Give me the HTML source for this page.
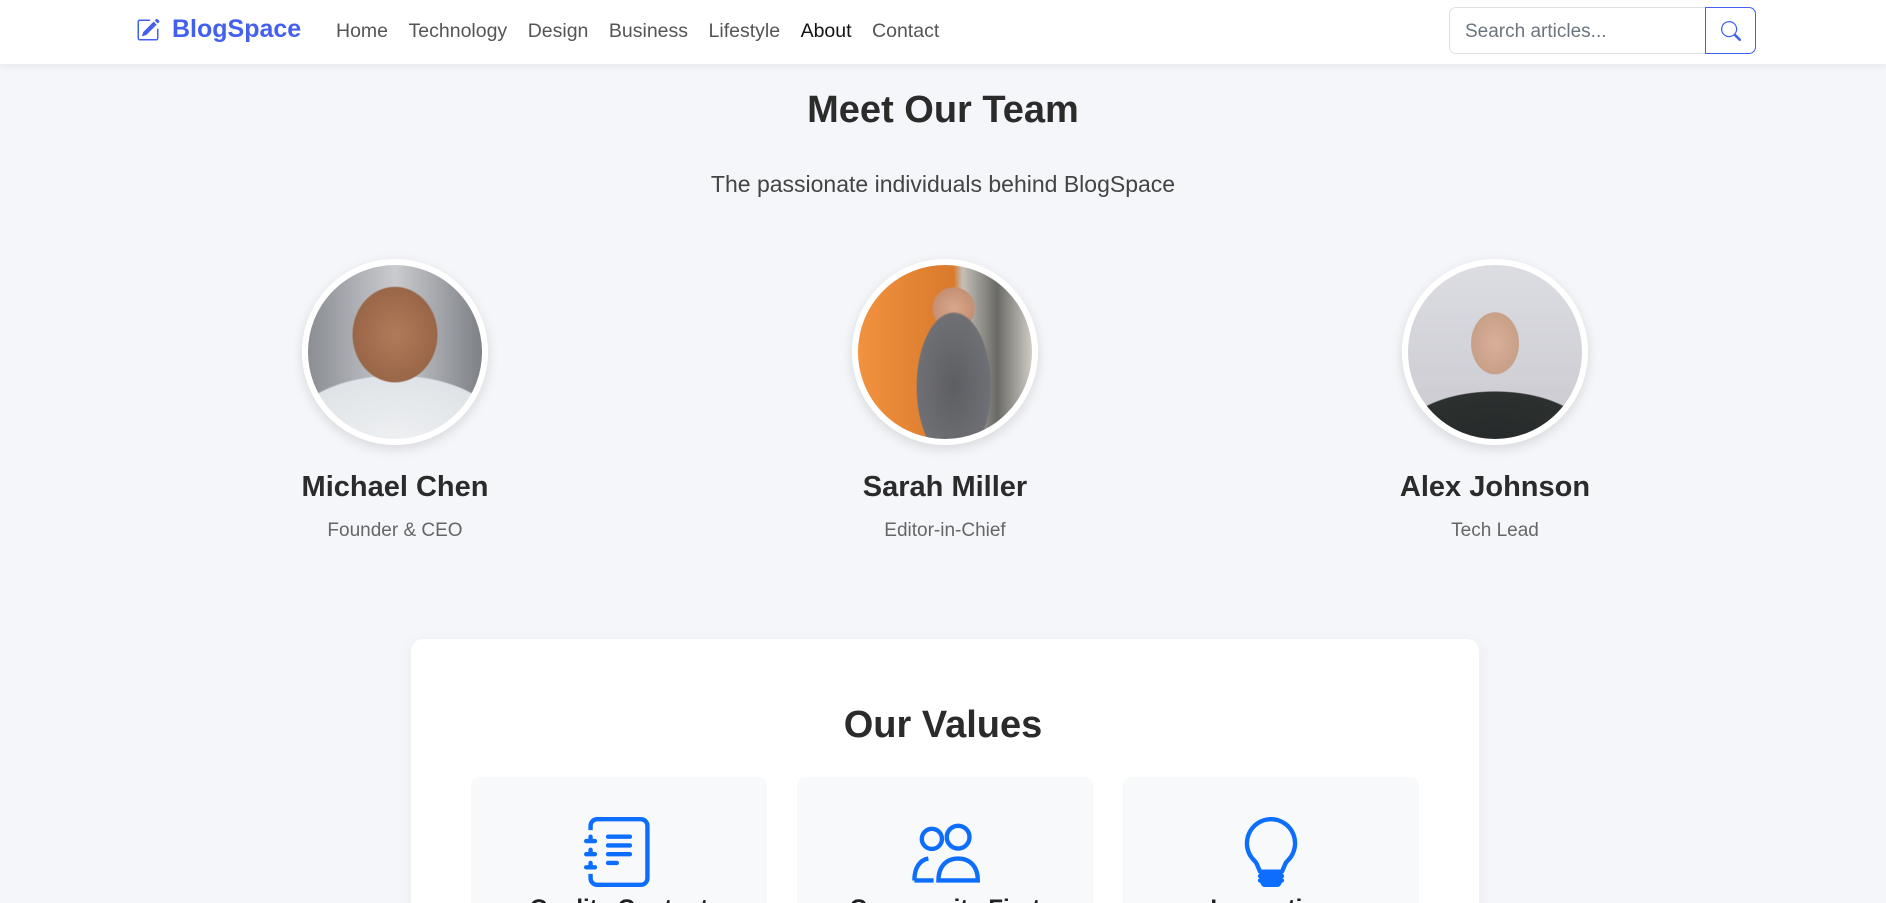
<!DOCTYPE html>
<html><head><meta charset="utf-8">
<style>
*{box-sizing:border-box;margin:0;padding:0}
html{width:1886px;height:903px;overflow:hidden}
body{width:1886px;height:903px;overflow:hidden;background:#f4f6fa;font-family:"Liberation Sans",sans-serif;color:#212529;position:relative}
.nav{position:absolute;left:0;top:0;width:1886px;height:64px;background:#fff;box-shadow:0 2px 8px rgba(0,0,0,.06);z-index:2}
.logo{position:absolute;left:136px;top:15px;display:flex;align-items:center;color:#4361ee;font-weight:bold;font-size:25px}
.logo svg{margin-right:12px}
.links{position:absolute;left:336px;top:20px;font-size:19.5px;color:#555}
.links span{margin-right:20.5px}
.search{position:absolute;left:1449px;top:7px;width:307px;height:47px;border:1px solid #dee2e6;border-radius:7px;background:#fff}
.search .ph{position:absolute;left:15px;top:13px;font-size:19px;color:#6c757d}
.search .btn{position:absolute;right:-1px;top:-1px;width:51px;height:47px;border:1px solid #4361ee;border-radius:0 7px 7px 0;display:flex;align-items:center;justify-content:center}
h2{position:absolute;width:100%;text-align:center;font-size:38px;font-weight:bold;color:#2b2b2b}
.sub{position:absolute;top:171px;width:100%;text-align:center;font-size:23px;color:#444;font-weight:300}
.m{position:absolute;width:300px;text-align:center}
.av{width:186px;height:186px;border-radius:50%;border:6px solid #fff;margin:0 auto;box-shadow:0 4px 12px rgba(0,0,0,.12)}
.m .n{margin-top:26px;font-size:29px;font-weight:bold;color:#2b2b2b}
.m .r{margin-top:16px;font-size:19px;color:#666}
.card{position:absolute;left:411px;top:639px;width:1068px;height:264px;background:#fff;border-radius:12px 12px 0 0;box-shadow:0 4px 16px rgba(0,0,0,.06)}
.vb{position:absolute;top:777px;width:296px;height:126px;overflow:hidden;background:#f8f9fa;border-radius:8px 8px 0 0;text-align:center}
.vb svg{margin-top:40px;display:block;margin-left:auto;margin-right:auto}
.vb .t{margin-top:10px;line-height:1;font-size:24px;font-weight:bold;color:#222;white-space:nowrap}
</style></head><body>
<div class="nav">
 <div class="logo"><svg width="24" height="24" viewBox="0 0 16 16" fill="#4361ee"><path d="M15.502 1.94a.5.5 0 0 1 0 .706L14.459 3.69l-2-2L13.502.646a.5.5 0 0 1 .707 0l1.293 1.293zm-1.75 2.456-2-2L4.939 9.21a.5.5 0 0 0-.121.196l-.805 2.414a.25.25 0 0 0 .316.316l2.414-.805a.5.5 0 0 0 .196-.12l6.813-6.814z"/><path fill-rule="evenodd" d="M1 13.5A1.5 1.5 0 0 0 2.5 15h11a1.5 1.5 0 0 0 1.5-1.5v-6a.5.5 0 0 0-1 0v6a.5.5 0 0 1-.5.5h-11a.5.5 0 0 1-.5-.5v-11a.5.5 0 0 1 .5-.5H9a.5.5 0 0 0 0-1H2.5A1.5 1.5 0 0 0 1 2.5z"/></svg>BlogSpace</div>
 <div class="links"><span>Home</span><span>Technology</span><span>Design</span><span>Business</span><span>Lifestyle</span><span style="color:#111">About</span><span>Contact</span></div>
 <div class="search"><div class="ph">Search articles...</div><div class="btn"><svg width="20" height="20" viewBox="0 0 16 16" fill="#4361ee"><path d="M11.742 10.344a6.5 6.5 0 1 0-1.397 1.398h-.001q.044.06.098.115l3.850 3.850a1 1 0 0 0 1.415-1.414l-3.850-3.850a1 1 0 0 0-.115-.1zM12 6.5a5.5 5.5 0 1 1-11 0 5.5 5.5 0 0 1 11 0"/></svg></div></div>
</div>
<h2 style="top:89px">Meet Our Team</h2>
<div class="sub">The passionate individuals behind BlogSpace</div>
<div class="m" style="left:245px;top:259px"><div class="av" style="background:radial-gradient(ellipse 40% 45% at 50% 40%,#b07a5a 0,#9a6648 60%,transparent 62%),radial-gradient(ellipse 70% 40% at 50% 100%,#eef0f2 0,#dfe3e7 90%,transparent 92%),linear-gradient(90deg,#8a8d92,#c9cbcf 50%,#7d8085)"></div><div class="n">Michael Chen</div><div class="r">Founder &amp; CEO</div></div>
<div class="m" style="left:795px;top:259px"><div class="av" style="background:radial-gradient(ellipse 30% 60% at 55% 70%,#5d5e62 0,#6f7075 70%,transparent 72%),radial-gradient(ellipse 15% 15% at 55% 25%,#d8a88a 0,#c49074 80%,transparent 82%),linear-gradient(90deg,#f0923e,#d97a2c 55%,#c4c0b8 60%,#6a6a66 80%,#d0ccc4)"></div><div class="n">Sarah Miller</div><div class="r">Editor-in-Chief</div></div>
<div class="m" style="left:1345px;top:259px"><div class="av" style="background:radial-gradient(ellipse 60% 30% at 50% 100%,#262a2a 0,#2c302f 90%,transparent 92%),radial-gradient(ellipse 17% 22% at 50% 45%,#d8b09a 0,#c8a088 80%,transparent 82%),linear-gradient(#dcdde2,#c9c9cf)"></div><div class="n">Alex Johnson</div><div class="r">Tech Lead</div></div>
<div class="card"></div>
<h2 style="top:704px">Our Values</h2>
<div class="vb" style="left:471px"><svg width="70" height="70" viewBox="0 0 16 16" fill="#0d6efd"><path d="M5 10.5a.5.5 0 0 1 .5-.5h2a.5.5 0 0 1 0 1h-2a.5.5 0 0 1-.5-.5m0-2a.5.5 0 0 1 .5-.5h5a.5.5 0 0 1 0 1h-5a.5.5 0 0 1-.5-.5m0-2a.5.5 0 0 1 .5-.5h5a.5.5 0 0 1 0 1h-5a.5.5 0 0 1-.5-.5m0-2a.5.5 0 0 1 .5-.5h5a.5.5 0 0 1 0 1h-5a.5.5 0 0 1-.5-.5"/><path d="M3 0h10a2 2 0 0 1 2 2v12a2 2 0 0 1-2 2H3a2 2 0 0 1-2-2v-1h1v1a1 1 0 0 0 1 1h10a1 1 0 0 0 1-1V2a1 1 0 0 0-1-1H3a1 1 0 0 0-1 1v1H1V2a2 2 0 0 1 2-2"/><path d="M1 5v-.5a.5.5 0 0 1 1 0V5h.5a.5.5 0 0 1 0 1h-2a.5.5 0 0 1 0-1zm0 3v-.5a.5.5 0 0 1 1 0V8h.5a.5.5 0 0 1 0 1h-2a.5.5 0 0 1 0-1zm0 3v-.5a.5.5 0 0 1 1 0v.5h.5a.5.5 0 0 1 0 1h-2a.5.5 0 0 1 0-1z"/></svg><div class="t">Quality Content</div></div>
<div class="vb" style="left:797px"><svg width="70" height="70" viewBox="0 0 16 16" fill="none" stroke="#0d6efd" stroke-width="1"><circle cx="5" cy="5" r="2.3"/><circle cx="11" cy="4.6" r="2.6"/><path d="M1 14.5c0-3 1.3-4.7 3.2-5M6.5 14.5h9c0-3.2-1.8-5-4.5-5s-4.5 1.8-4.5 5z"/><path d="M1 14.5h4.4"/></svg><div class="t">Community First</div></div>
<div class="vb" style="left:1123px"><svg width="70" height="70" viewBox="0 0 16 16" fill="#0d6efd"><path d="M2 6a6 6 0 1 1 10.174 4.31c-.203.196-.359.4-.453.619l-.762 1.769A.5.5 0 0 1 10.5 13a.5.5 0 0 1 0 1 .5.5 0 0 1 0 1l-.224.447a1 1 0 0 1-.894.553H6.618a1 1 0 0 1-.894-.553L5.5 15a.5.5 0 0 1 0-1 .5.5 0 0 1 0-1 .5.5 0 0 1-.46-.302l-.761-1.77a2 2 0 0 0-.453-.618A5.980 5.980 0 0 1 2 6m6-5a5 5 0 0 0-3.479 8.592c.263.254.514.564.676.941L5.830 12h4.342l.632-1.467c.162-.377.413-.687.676-.941A5 5 0 0 0 8 1"/></svg><div class="t">Innovation</div></div>
</body></html>
